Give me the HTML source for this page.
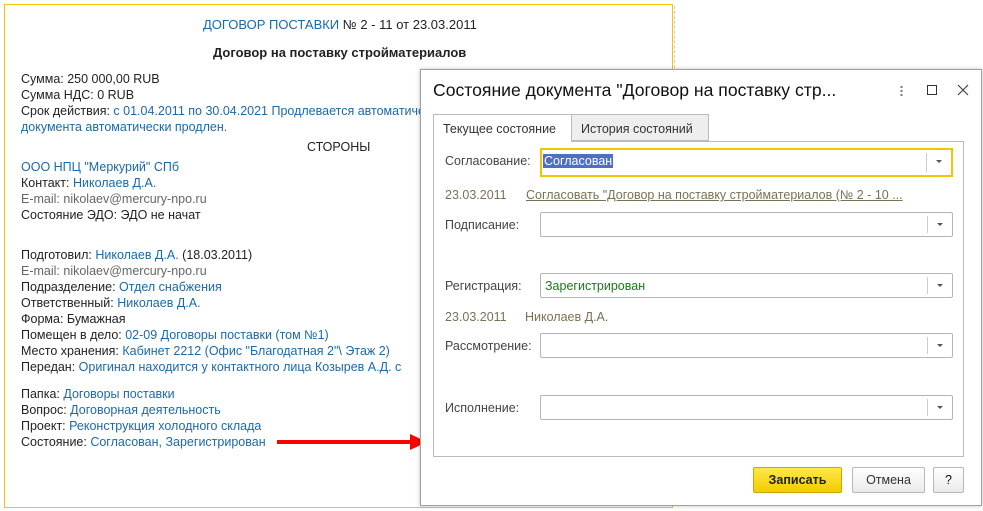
<!DOCTYPE html>
<html><head><meta charset="utf-8"><style>
*{margin:0;padding:0;box-sizing:border-box}
body{width:983px;height:511px;background:#fff;position:relative;overflow:hidden;font-family:"Liberation Sans",Arial,sans-serif;font-size:12.5px;color:#222}
.a{position:absolute;white-space:nowrap}
.b{color:#1c69a8}
.g{color:#666}
.frame{position:absolute;left:4px;top:4px;width:669px;height:504px;border:1px solid #f5c400}
.dash{position:absolute;left:674px;top:6px;height:62px;border-left:1px dashed #ccc}
.L{left:21px}
.dlg{position:absolute;left:420px;top:69px;width:562px;height:437px;background:#fff;border:1px solid #a0a0a0;box-shadow:0 0 4px rgba(0,0,0,.25)}
.dlg .a{font-size:12.5px}
.lab{color:#444}
.inp{position:absolute;left:119px;width:413px;height:25px;border:1px solid #b5b5b5;border-radius:2px;background:#fff}
.inp:after{content:"";position:absolute;right:0;top:3px;bottom:3px;width:24px;border-left:1px solid #ccc}
.inp i{position:absolute;right:9px;top:10px;border-left:3px solid transparent;border-right:3px solid transparent;border-top:3px solid #555;z-index:2}
.dt{color:#7a7155}
.btn{position:absolute;top:397px;height:26px;border:1px solid #b8b8b8;border-radius:2px;background:linear-gradient(#fff,#eaeaea);text-align:center;line-height:24px;font-size:12.5px;color:#333}
</style></head><body>
<div class="frame"></div>
<div class="dash"></div>
<div class="a" style="left:203px;top:17px;font-size:13px"><span class="b">ДОГОВОР ПОСТАВКИ</span> № 2 - 11 от 23.03.2011</div>
<div class="a" style="left:213px;top:45px;font-weight:bold;font-size:13px">Договор на поставку стройматериалов</div>
<div class="a L" style="top:72px">Сумма: 250 000,00 RUB</div>
<div class="a L" style="top:88px">Сумма НДС: 0 RUB</div>
<div class="a L" style="top:104px">Срок действия: <span class="b">с 01.04.2011 по 30.04.2021 Продлевается автоматически</span></div>
<div class="a L b" style="top:120px">документа автоматически продлен.</div>
<div class="a" style="left:307px;top:140px">СТОРОНЫ</div>
<div class="a L b" style="top:160px">ООО НПЦ "Меркурий" СПб</div>
<div class="a L" style="top:176px">Контакт: <span class="b">Николаев Д.А.</span></div>
<div class="a L g" style="top:192px">E-mail: nikolaev@mercury-npo.ru</div>
<div class="a L" style="top:208px">Состояние ЭДО: ЭДО не начат</div>
<div class="a L" style="top:248px">Подготовил: <span class="b">Николаев Д.А.</span> (18.03.2011)</div>
<div class="a L g" style="top:264px">E-mail: nikolaev@mercury-npo.ru</div>
<div class="a L" style="top:280px">Подразделение: <span class="b">Отдел снабжения</span></div>
<div class="a L" style="top:296px">Ответственный: <span class="b">Николаев Д.А.</span></div>
<div class="a L" style="top:312px">Форма: Бумажная</div>
<div class="a L" style="top:328px">Помещен в дело: <span class="b">02-09 Договоры поставки (том №1)</span></div>
<div class="a L" style="top:344px">Место хранения: <span class="b">Кабинет 2212 (Офис "Благодатная 2"\ Этаж 2)</span></div>
<div class="a L" style="top:360px">Передан: <span class="b">Оригинал находится у контактного лица Козырев А.Д. с</span></div>
<div class="a L" style="top:387px">Папка: <span class="b">Договоры поставки</span></div>
<div class="a L" style="top:403px">Вопрос: <span class="b">Договорная деятельность</span></div>
<div class="a L" style="top:419px">Проект: <span class="b">Реконструкция холодного склада</span></div>
<div class="a L" style="top:435px">Состояние: <span class="b">Согласован, Зарегистрирован</span></div>
<div style="position:absolute;left:277px;top:440px;width:135px;height:4px;background:#f00"></div>
<div style="position:absolute;left:410px;top:434px;border-left:17px solid #f00;border-top:8px solid transparent;border-bottom:8px solid transparent"></div>

<div class="dlg">
 <div class="a" style="left:12px;top:10px;font-size:17.6px;color:#111">Состояние документа "Договор на поставку стр...</div>
 <div class="a" style="left:479px;top:15px;width:3px;height:12px;background:radial-gradient(circle,#777 1px,transparent 1.3px) 0 0/3px 4px"></div>
 <div class="a" style="left:506px;top:15px;width:10px;height:10px;border:1px solid #333"></div>
 <svg class="a" style="left:536px;top:14px" width="12" height="12" viewBox="0 0 12 12"><path d="M1 1L11 11M11 1L1 11" stroke="#444" stroke-width="1.2" fill="none"/></svg>
 <div class="a" style="left:12px;top:44px;width:139px;height:28px;border:1px solid #bbb;border-bottom:none;background:#fff;z-index:2;padding:7px 0 0 9px;color:#333">Текущее состояние</div>
 <div class="a" style="left:151px;top:44px;width:137px;height:27px;border:1px solid #bbb;border-left:none;background:#eee;padding:7px 0 0 9px;color:#333">История состояний</div>
 <div class="a" style="left:12px;top:71px;width:531px;height:316px;border:1px solid #bbb"></div>
 <div class="a lab" style="left:24px;top:84px">Согласование:</div>
 <div class="inp" style="top:78px;height:29px;border:2px solid #f5c400;border-radius:0"><i></i></div>
 <div class="a" style="left:122px;top:84px;background:#4e6fc6;color:#fff;padding:0 1px">Согласован</div>
 <div class="a dt" style="left:24px;top:118px">23.03.2011</div>
 <div class="a dt" style="left:105px;top:118px;text-decoration:underline">Согласовать "Договор на поставку стройматериалов (№ 2 - 10 ...</div>
 <div class="a lab" style="left:24px;top:148px">Подписание:</div>
 <div class="inp" style="top:142px"><i></i></div>
 <div class="a lab" style="left:24px;top:209px">Регистрация:</div>
 <div class="inp" style="top:203px"><i></i></div>
 <div class="a" style="left:124px;top:209px;color:#1a7a1a">Зарегистрирован</div>
 <div class="a dt" style="left:24px;top:240px">23.03.2011</div>
 <div class="a dt" style="left:104px;top:240px">Николаев Д.А.</div>
 <div class="a lab" style="left:24px;top:269px">Рассмотрение:</div>
 <div class="inp" style="top:263px"><i></i></div>
 <div class="a lab" style="left:24px;top:331px">Исполнение:</div>
 <div class="inp" style="top:325px"><i></i></div>
 <div class="btn" style="left:332px;width:89px;background:linear-gradient(#ffe84a,#f2cc00);border-color:#c9a800;font-weight:bold;color:#222">Записать</div>
 <div class="btn" style="left:431px;width:73px">Отмена</div>
 <div class="btn" style="left:512px;width:31px;color:#111">?</div>
</div>
</body></html>
